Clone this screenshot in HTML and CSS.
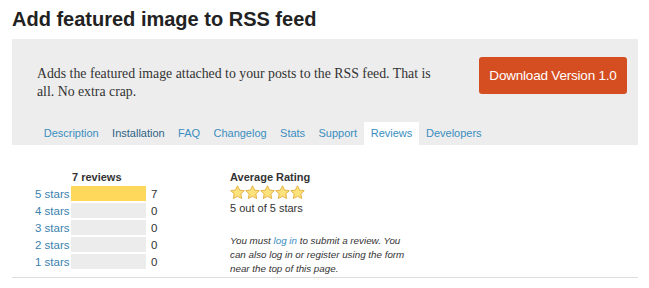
FILE: index.html
```html
<!DOCTYPE html>
<html>
<head>
<meta charset="utf-8">
<link rel="stylesheet" href="styles.css">
</head>
<body>
<div class="page">
  <h1 class="title">Add featured image to RSS feed</h1>
  <div class="box">
    <div class="top">
      <p class="desc">Adds the featured image attached to your posts to the RSS feed. That is all. No extra crap.</p>
      <a class="download" href="#">Download Version 1.0</a>
    </div>
    <ul class="tabs">
      <li class="tab">Description</li>
      <li class="tab dark">Installation</li>
      <li class="tab">FAQ</li>
      <li class="tab">Changelog</li>
      <li class="tab">Stats</li>
      <li class="tab">Support</li>
      <li class="tab active">Reviews</li>
      <li class="tab">Developers</li>
    </ul>
  </div>
  <div class="reviews">
    <div class="counts">
      <div class="counts-head">7 reviews</div>
      <div class="row"><span class="lbl">5 stars</span><span class="bar"><span class="fill" style="width:100%"></span></span><span class="num">7</span></div>
      <div class="row"><span class="lbl">4 stars</span><span class="bar"><span class="fill" style="width:0%"></span></span><span class="num">0</span></div>
      <div class="row"><span class="lbl">3 stars</span><span class="bar"><span class="fill" style="width:0%"></span></span><span class="num">0</span></div>
      <div class="row"><span class="lbl">2 stars</span><span class="bar"><span class="fill" style="width:0%"></span></span><span class="num">0</span></div>
      <div class="row"><span class="lbl">1 stars</span><span class="bar"><span class="fill" style="width:0%"></span></span><span class="num">0</span></div>
    </div>
    <div class="avg">
      <div class="avg-head">Average Rating</div>
      <div class="stars">
        <svg class="star" viewBox="0 0 16 16"><path d="M8 .8l2.2 4.6 5 .65-3.65 3.45.93 4.95L8 12.05 3.52 14.45l.93-4.950L.8 6.05l5-.65z"/></svg>
        <svg class="star" viewBox="0 0 16 16"><path d="M8 .8l2.2 4.6 5 .65-3.65 3.45.93 4.95L8 12.05 3.52 14.45l.93-4.95L.8 6.05l5-.65z"/></svg>
        <svg class="star" viewBox="0 0 16 16"><path d="M8 .8l2.2 4.6 5 .65-3.65 3.45.93 4.95L8 12.05 3.52 14.45l.93-4.95L.8 6.05l5-.65z"/></svg>
        <svg class="star" viewBox="0 0 16 16"><path d="M8 .8l2.2 4.6 5 .65-3.65 3.45.93 4.95L8 12.05 3.52 14.45l.93-4.95L.8 6.05l5-.65z"/></svg>
        <svg class="star" viewBox="0 0 16 16"><path d="M8 .8l2.2 4.6 5 .65-3.65 3.45.93 4.95L8 12.05 3.52 14.45l.93-4.95L.8 6.05l5-.65z"/></svg>
      </div>
      <div class="avg-text">5 out of 5 stars</div>
      <p class="note">You must <a href="#">log in</a> to submit a review. You can also log in or register using the form near the top of this page.</p>
    </div>
  </div>
</div>
</body>
</html>
```
FILE: styles.css
```css
* { box-sizing: border-box; }
html, body { margin: 0; padding: 0; background: #fff; }
body { font-family: "Liberation Sans", Arial, sans-serif; color: #333; }
.page { padding: 0 11px 0 12px; }
.title {
  margin: 0;
  padding-top: 7px;
  height: 39px;
  font-size: 20px;
  line-height: 24px;
  font-weight: bold;
  color: #222;
}
.box {
  background: #ededed;
  padding: 18px 11px 0 25px;
  height: 106px;
  display: flex;
  flex-direction: column;
}
.top { display: flex; justify-content: space-between; align-items: flex-start; }
.desc {
  margin: 8px 0 0;
  width: 400px;
  font-family: "Liberation Serif", "Times New Roman", serif;
  font-size: 13.8px;
  line-height: 18px;
  color: #333;
}
.download {
  display: block;
  width: 148px;
  height: 37px;
  background: #d54e21;
  border-radius: 3px;
  color: #fff;
  text-decoration: none;
  font-size: 13.5px;
  line-height: 37px;
  text-align: center;
  letter-spacing: -0.2px;
}
.tabs {
  list-style: none;
  margin: auto 0 0;
  padding: 0;
  display: flex;
}
.tab {
  padding: 0 6.7px;
  height: 23px;
  line-height: 23px;
  font-size: 11px;
  color: #3a8dc0;
}
.tab.dark { color: #2f6385; }
.tab.active { background: #fff; padding: 0 7px; }
.reviews { display: flex; padding-top: 25px; border-bottom: 1px solid #ddd; height: 133px; }
.counts { width: 218px; padding-left: 23px; }
.counts-head {
  padding-left: 37px;
  font-weight: bold;
  font-size: 11px;
  line-height: 14px;
  color: #333;
  margin-bottom: 1px;
}
.row { display: flex; align-items: center; height: 17px; }
.lbl { width: 33px; text-align: right; font-size: 11.5px; color: #3a7fae; margin-right: 3px; white-space: nowrap; }
.bar { width: 75px; height: 15px; background: #ececec; display: block; }
.fill { display: block; height: 100%; background: #fdd85a; }
.num { margin-left: 5px; font-size: 11.5px; color: #333; }
.avg { width: 180px; }
.avg-head { font-weight: bold; font-size: 11px; line-height: 14px; color: #333; }
.stars { display: flex; height: 17px; align-items: center; }
.star { width: 15px; height: 15px; fill: #fce27a; stroke: #e0a936; stroke-width: 0.9; }
.avg-text { font-size: 11px; line-height: 15px; color: #333; }
.note {
  margin: 18px 0 0;
  width: 177px;
  font-style: italic;
  font-size: 9.8px;
  line-height: 14px;
  color: #333;
}
.note a { color: #3a8dc0; text-decoration: none; }
```
